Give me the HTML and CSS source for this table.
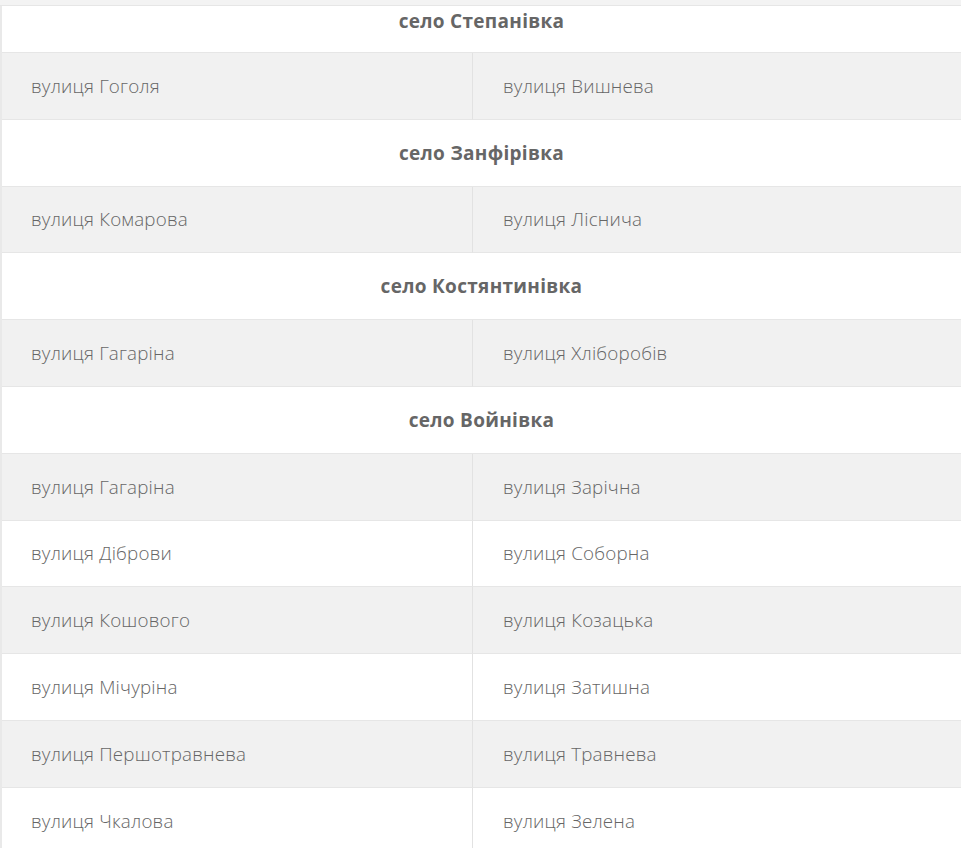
FILE: index.html
```html
<!DOCTYPE html>
<html lang="uk">
<head>
<meta charset="utf-8">
<title>Вулиці</title>
<link rel="stylesheet" href="styles.css">
</head>
<body>
<div class="top-strip"></div>
<div class="table">
  <div class="head first">село Степанівка</div>
  <div class="cell grey left">вулиця Гоголя</div>
  <div class="cell grey">вулиця Вишнева</div>

  <div class="head">село Занфірівка</div>
  <div class="cell grey left">вулиця Комарова</div>
  <div class="cell grey">вулиця Ліснича</div>

  <div class="head">село Костянтинівка</div>
  <div class="cell grey left">вулиця Гагаріна</div>
  <div class="cell grey">вулиця Хліборобів</div>

  <div class="head">село Войнівка</div>
  <div class="cell grey left">вулиця Гагаріна</div>
  <div class="cell grey">вулиця Зарічна</div>
  <div class="cell left">вулиця Діброви</div>
  <div class="cell">вулиця Соборна</div>
  <div class="cell grey left">вулиця Кошового</div>
  <div class="cell grey">вулиця Козацька</div>
  <div class="cell left">вулиця Мічуріна</div>
  <div class="cell">вулиця Затишна</div>
  <div class="cell grey left">вулиця Першотравнева</div>
  <div class="cell grey">вулиця Травнева</div>
  <div class="cell left">вулиця Чкалова</div>
  <div class="cell">вулиця Зелена</div>
</div>
</body>
</html>
```
FILE: styles.css
```css
html, body {
  margin: 0;
  padding: 0;
  background: #ffffff;
}
body {
  font-family: "Open Sans", "Liberation Sans", sans-serif;
  color: #666666;
  overflow: hidden;
}
.top-strip {
  height: 5px;
  background: #f3f3f3;
  border-bottom: 1px solid #e6e6e6;
}
.table {
  display: grid;
  grid-template-columns: 471px 1fr;
  border-left: 2px solid #e9e9e9;
}
.head {
  grid-column: 1 / -1;
  height: 65.8px;
  display: flex;
  align-items: center;
  justify-content: center;
  font-weight: 700;
  font-size: 19px;
  letter-spacing: 0.3px;
  color: #666666;
  border-bottom: 1px solid #e6e6e6;
  background: #ffffff;
}
.head.first {
  height: 47px;
  align-items: flex-start;
  padding-top: 2px;
  box-sizing: border-box;
}
.cell {
  height: 65.8px;
  display: flex;
  align-items: center;
  padding-left: 30px;
  font-weight: 300;
  font-size: 18.8px;
  letter-spacing: 0.2px;
  color: #666666;
  border-bottom: 1px solid #e6e6e6;
  background: #ffffff;
}
.cell.grey {
  background: #f1f1f1;
}
.cell.left {
  padding-left: 29px;
  border-right: 1px solid #e2e2e2;
}
```
